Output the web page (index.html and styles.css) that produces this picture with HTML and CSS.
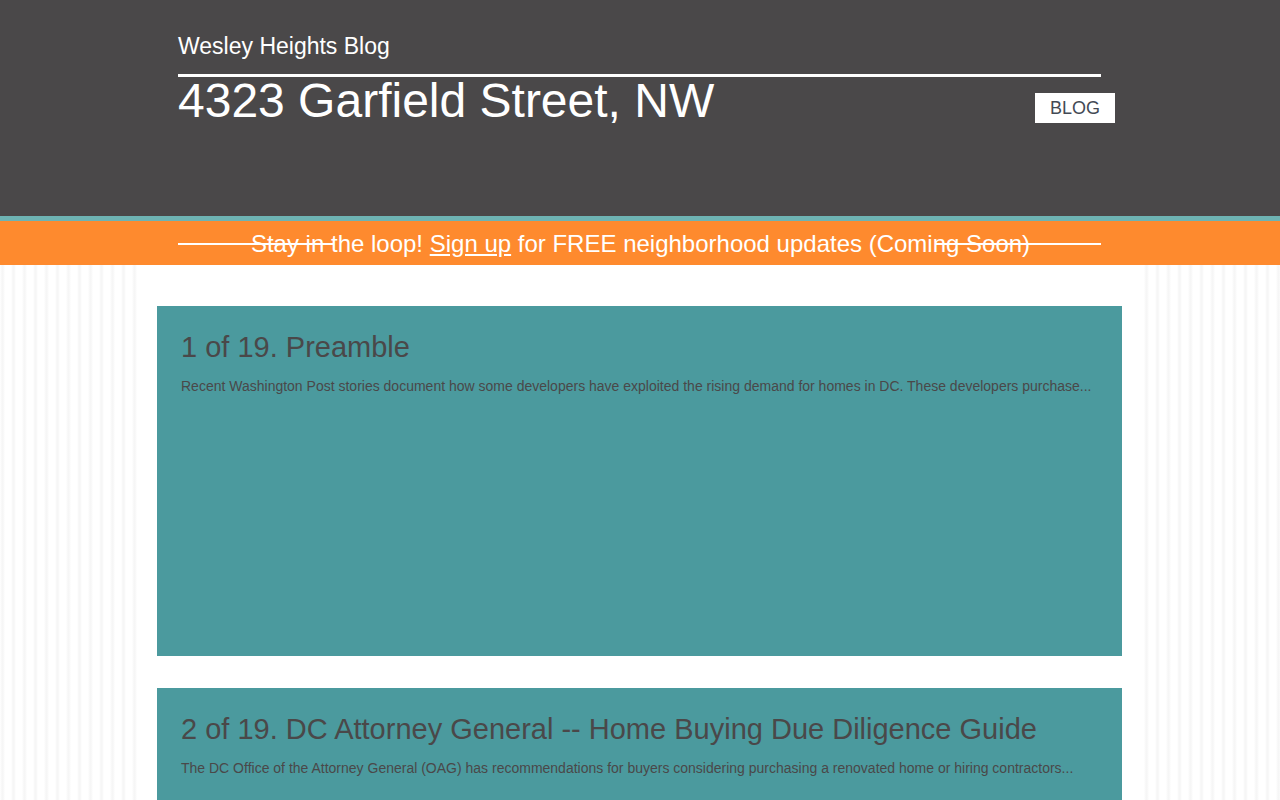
FILE: index.html
```html
<!DOCTYPE html>
<html lang="en">
<head>
<meta charset="utf-8">
<title>4323 Garfield Street, NW - Wesley Heights Blog</title>
<link rel="stylesheet" href="styles.css">
</head>
<body>
<header class="site-header">
  <div class="header-inner">
    <div class="blog-name">Wesley Heights Blog</div>
    <div class="rule"></div>
    <div class="title-row">
      <h1 class="page-title">4323 Garfield Street, NW</h1>
      <a class="nav-btn" href="#">BLOG</a>
    </div>
  </div>
</header>
<div class="teal-strip"></div>
<div class="promo">
  <div class="promo-text">Stay in the loop! <a href="#">Sign up</a> for FREE neighborhood updates (Coming Soon)</div>
</div>
<main class="content">
  <article class="card card-tall">
    <h2 class="card-title">1 of 19. Preamble</h2>
    <p class="card-excerpt">Recent Washington Post stories document how some developers have exploited the rising demand for homes in DC. These developers purchase...</p>
  </article>
  <article class="card card-tall">
    <h2 class="card-title">2 of 19. DC Attorney General -- Home Buying Due Diligence Guide</h2>
    <p class="card-excerpt">The DC Office of the Attorney General (OAG) has recommendations for buyers considering purchasing a renovated home or hiring contractors...</p>
  </article>
</main>
</body>
</html>
```
FILE: styles.css
```css
html, body {
  margin: 0;
  padding: 0;
}
body {
  font-family: "Liberation Sans", Arial, sans-serif;
  background-color: #fff;
  background-image: repeating-linear-gradient(90deg, #fff 0px, #f6f6f6 2px, #f6f6f6 3px, #fff 5px, #fff 11px);
  min-height: 800px;
}
.site-header {
  background: #4a4849;
  height: 216px;
  box-sizing: border-box;
  padding-top: 34px;
}
.header-inner {
  width: 937px;
  margin-left: 178px;
}
.blog-name {
  color: #fff;
  font-size: 23px;
  line-height: 25px;
}
.rule {
  width: 923px;
  height: 3px;
  background: #fff;
  margin-top: 15px;
}
.title-row {
  display: flex;
  justify-content: space-between;
  align-items: flex-start;
}
.page-title {
  margin: 0;
  color: #fff;
  font-weight: normal;
  font-size: 48px;
  line-height: 48px;
}
.nav-btn {
  margin-top: 16px;
  display: block;
  background: #fff;
  color: #434a55;
  font-size: 18px;
  line-height: 30px;
  height: 30px;
  width: 80px;
  text-align: center;
  text-decoration: none;
}
.teal-strip {
  height: 5px;
  background: #6eb3b3;
}
.promo {
  position: relative;
  background: #fe8a2e;
  height: 44px;
  color: #fff;
  text-align: center;
  font-size: 24px;
  line-height: 46px;
}
.promo::before {
  content: "";
  position: absolute;
  left: 178px;
  top: 22px;
  width: 923px;
  height: 2px;
  background: linear-gradient(90deg, #fff 0, #fff 155px, transparent 155px, transparent 757px, #fff 757px, #fff 100%);
}
.promo-text {
  position: relative;
  padding-left: 1px;
}
.promo a {
  color: #fff;
  text-decoration: underline;
}
.content {
  width: 996px;
  margin: 0 auto;
  background: #fff;
  box-sizing: border-box;
  padding: 41px 16px 1px 15px;
  display: flex;
  flex-direction: column;
  gap: 32px;
}
.card {
  background: #4b9a9e;
  height: 350px;
  box-sizing: border-box;
  padding: 25px 24px;
  color: #4a4849;
}
.card-title {
  margin: 0;
  font-weight: normal;
  font-size: 29px;
  line-height: 32px;
}
.card-excerpt {
  margin: 15px 0 0;
  font-size: 14px;
  line-height: 16px;
}
```
